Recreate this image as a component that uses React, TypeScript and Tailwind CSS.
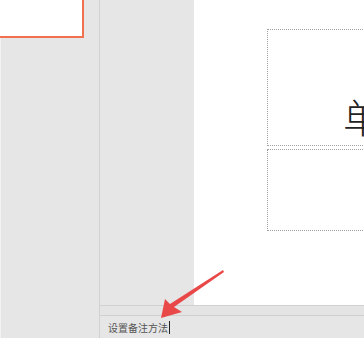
import React from 'react'

const cjk = { fontFamily: '"Noto Sans CJK SC", "Noto Sans", sans-serif' }

export default function App() {
  return (
    <div className="relative flex w-[364px] h-[338px] overflow-hidden bg-[#e6e6e6]" style={cjk}>
      {/* Thumbnails pane */}
      <div className="w-[100px] shrink-0 border-l border-[#f2f2f2] border-r border-r-[#d2d2d2]">
        <div className="w-[84px] h-[38px] -ml-px bg-white border-r-2 border-b-2 border-[#f07050]" />
      </div>

      {/* Editor column */}
      <div className="flex-1 flex flex-col min-w-0">
        <div className="flex h-[306px] border-b border-[#d0d0d0]">
          <div className="w-[94px] shrink-0" />
          <div className="flex-1 bg-white pt-[29px] pl-[73px] overflow-hidden">
            <div className="flex flex-col gap-[3px] w-[120px]">
              <div className="relative h-[117px] border border-dotted border-[#a0a0a0]">
                <span className="absolute left-[75px] top-[86px] -translate-y-1/2 text-[40px] font-light leading-none text-[#222]">单</span>
              </div>
              <div className="h-[82px] border border-dotted border-[#a0a0a0]" />
            </div>
          </div>
        </div>
        <div className="h-[10px] border-b border-[#d0d0d0] bg-[#e4e4e4]" />
        <div className="flex-1 pl-[8px] pt-[4px]">
          <div className="flex items-center text-[10px] text-[#555]">
            <span>设置备注方法</span>
            <span className="ml-[1px] w-px h-[13px] bg-[#222]" />
          </div>
        </div>
      </div>

      {/* Annotation arrow */}
      <svg className="absolute left-0 top-0 pointer-events-none" width="364" height="338">
        <polygon
          points="224,272 174,307 182,312 161,318 165,299 170,304 223,270"
          fill="#e94848"
        />
      </svg>
    </div>
  )
}
